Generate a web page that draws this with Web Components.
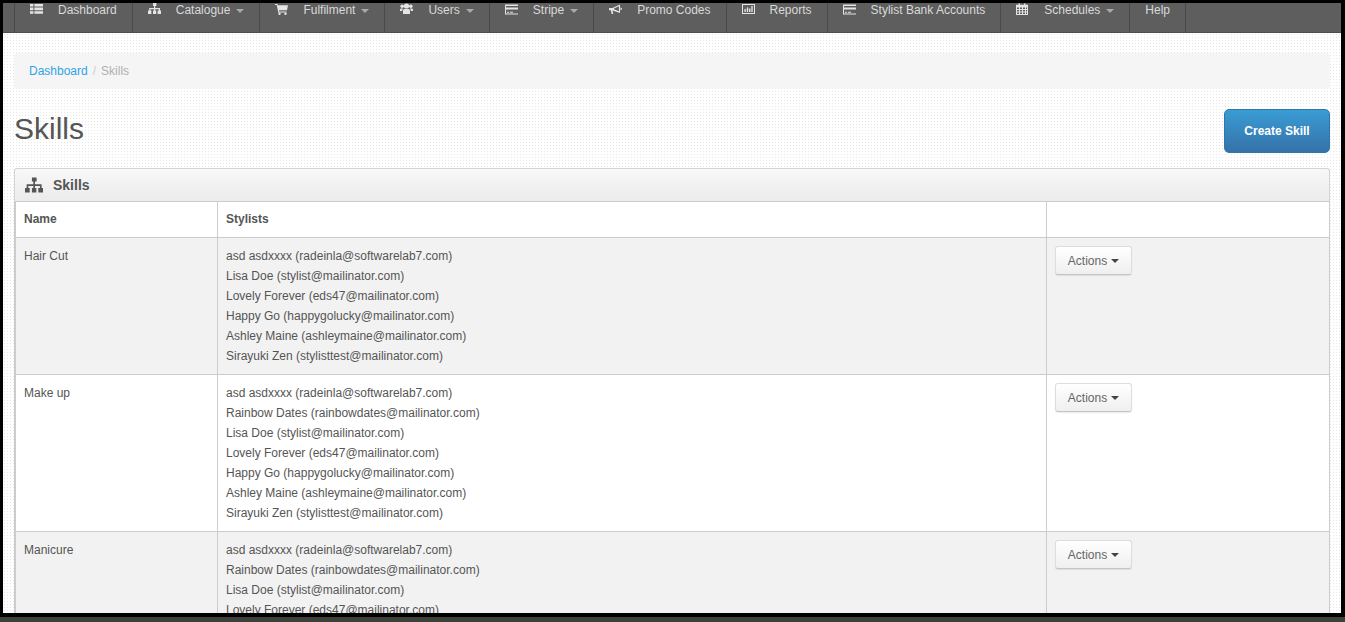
<!DOCTYPE html>
<html><head><meta charset="utf-8">
<style>
html,body{margin:0;height:100%;overflow:hidden;background:#000}
body{font:12px/20px "Liberation Sans",Arial,sans-serif;color:#555}
</style></head><body>
<app-shell>
  <top-nav>
    <nav-item icon="table">Dashboard</nav-item>
    <nav-item icon="sitemap" caret>Catalogue</nav-item>
    <nav-item icon="cart" caret>Fulfilment</nav-item>
    <nav-item icon="users" caret>Users</nav-item>
    <nav-item icon="card" caret>Stripe</nav-item>
    <nav-item icon="bullhorn">Promo Codes</nav-item>
    <nav-item icon="chart">Reports</nav-item>
    <nav-item icon="card">Stylist Bank Accounts</nav-item>
    <nav-item icon="calendar" caret>Schedules</nav-item>
    <nav-item>Help</nav-item>
  </top-nav>
  <page-body>
    <bread-crumb current="Skills">Dashboard</bread-crumb>
    <page-head title="Skills" action="Create Skill"></page-head>
    <skills-panel heading="Skills">
      <skill-row head name="Name" stylists="Stylists"></skill-row>
      <skill-row odd name="Hair Cut" stylists="asd asdxxxx (radeinla@softwarelab7.com)|Lisa Doe (stylist@mailinator.com)|Lovely Forever (eds47@mailinator.com)|Happy Go (happygolucky@mailinator.com)|Ashley Maine (ashleymaine@mailinator.com)|Sirayuki Zen (stylisttest@mailinator.com)"></skill-row>
      <skill-row name="Make up" stylists="asd asdxxxx (radeinla@softwarelab7.com)|Rainbow Dates (rainbowdates@mailinator.com)|Lisa Doe (stylist@mailinator.com)|Lovely Forever (eds47@mailinator.com)|Happy Go (happygolucky@mailinator.com)|Ashley Maine (ashleymaine@mailinator.com)|Sirayuki Zen (stylisttest@mailinator.com)"></skill-row>
      <skill-row odd name="Manicure" stylists="asd asdxxxx (radeinla@softwarelab7.com)|Rainbow Dates (rainbowdates@mailinator.com)|Lisa Doe (stylist@mailinator.com)|Lovely Forever (eds47@mailinator.com)"></skill-row>
    </skills-panel>
  </page-body>
  <screen-edge></screen-edge>
</app-shell>
<script>
const ICONS={
table:'<path d="M0 1h3.4v2.6H0zM4.4 1H13v2.6H4.4zM0 4.6h3.4v2.6H0zM4.4 4.6H13v2.6H4.4zM0 8.2h3.4v2.6H0zM4.4 8.2H13v2.6H4.4z"/>',
sitemap:'<path d="M5 0h3.4v3H7.2v2H12v2.6h1V11H9.6V7.6h1.2V6.2H7.2v1.4h1V11H5V7.6h1V6.2H2.4v1.4h1V11H0V7.6h1.200V5H6V3H5z"/>',
cart:'<path d="M0 1h2.400l.4 1.300H13l-1 5H4l.3 1.200H11.500v1H3.300L1.700 2H0z"/><circle cx="4.500" cy="10.800" r="1.200"/><circle cx="10.500" cy="10.800" r="1.200"/>',
users:'<circle cx="6.500" cy="3" r="2.600"/><circle cx="2.200" cy="3.200" r="1.800"/><circle cx="10.800" cy="3.200" r="1.800"/><path d="M3 11V7.500Q3 6 4.500 6h4Q10 6 10 7.500V11zM0 8V6.500Q0 5.400 1.200 5.400h2Q2.200 6 2.200 8zM13 8V6.500Q13 5.400 11.800 5.400h-2Q10.800 6 10.800 8z"/>',
card:'<path fill-rule="evenodd" d="M0 1.500h14v10H0zM1 3v1.500h12V3zM1 6.500V10.500h12V6.500zM2 8.800h2v.9H2zM5 8.800h3v.9H5z"/>',
bullhorn:'<path fill-rule="evenodd" d="M0 5h3.500L11 1.500V10L3.500 7.400l.8 3.600H2.600L1.800 7.300H0zM9.900 3.300L5 5.400v.9l4.900 1.900zM11.500 4.300Q13 4.800 13 5.800T11.500 7.300z"/>',
chart:'<path fill-rule="evenodd" d="M0 1h13v10H0zM1 2v8h11V2zM2.400 6h1.400v3H2.400zM4.800 4.500h1.400V9H4.800zM7 5.500h1.400V9H7zM9.300 3h1.400v6H9.300z"/>',
calendar:'<path fill-rule="evenodd" d="M0 1.800h2.500V.5h1.500v1.300h4V.5h1.500v1.300H12V12H0zM1 4.500V6h2V4.500zM4 4.500V6h2V4.500zM7 4.500V6h2V4.500zM10 4.500V6h1V4.500zM1 7V8.500h2V7zM4 7V8.500h2V7zM7 7V8.500h2V7zM10 7V8.500h1V7zM1 9.500V11h2V9.500zM4 9.500V11h2V9.500zM7 9.500V11h2V9.500zM10 9.500V11h1V9.500z"/>'
};
function def(name,css,html,setup){
  customElements.define(name,class extends HTMLElement{
    connectedCallback(){
      if(this.shadowRoot)return;
      const r=this.attachShadow({mode:'open'});
      r.innerHTML='<style>'+css+'</style>'+(typeof html==='function'?html(this):html);
    }
  });
}
const attr=(s)=>String(s==null?'':s).replace(/&/g,'&amp;').replace(/</g,'&lt;');
def('app-shell',`:host{display:block;position:relative;height:622px;overflow:hidden;background:#000}
.frame{position:absolute;inset:0}
.inner{height:100%;box-sizing:border-box;padding:3px 4px 0 3px}
`,`<div class="inner"><slot></slot></div>`);
def('top-nav',`:host{display:flex;box-sizing:border-box;height:30px;background:#5e5e5e;border-bottom:1px solid #4d4d4d;padding-left:11px;overflow:hidden}
::slotted(nav-item:last-child){border-right:1px solid #4a4a4a}`,`<slot></slot>`);
def('nav-item',`:host{display:flex;align-items:flex-start;box-sizing:border-box;height:100%;border-left:1px solid #4a4a4a;padding:0 15px;color:#d9d9d9;font-size:12px;line-height:14px;white-space:nowrap}
svg{width:13px;height:12px;margin:0 15px 0 0;fill:#e4e4e4;flex:none;margin-top:0}
.t{margin-top:0}
.c{display:inline-block;width:0;height:0;border:4px solid transparent;border-top-color:#aaa;border-bottom:0;margin:6px 0 0 6px}`,
el=>`${el.getAttribute('icon')?`<svg viewBox="0 0 13 12">${ICONS[el.getAttribute('icon')]}</svg>`:''}<span class="t"><slot></slot></span>${el.hasAttribute('caret')?'<i class="c"></i>':''}`);
def('page-body',`:host{display:block;box-sizing:border-box;height:590px;overflow:hidden;padding:20px 11px 0 11px;background-color:#fff;background-image:radial-gradient(#e8e8e8 .6px,transparent .7px);background-size:3px 3px}`,`<slot></slot>`);
def('bread-crumb',`:host{display:block;box-sizing:border-box;height:36px;padding:8px 15px;background:#f5f5f5;border-radius:4px;line-height:20px}
a{color:#2fa4e7}i{font-style:normal;color:#ccc;padding:0 5px}span{color:#b0b0b0}`,
el=>`<a><slot></slot></a><i>/</i><span>${attr(el.getAttribute('current'))}</span>`);
def('page-head',`:host{display:flex;justify-content:space-between;align-items:flex-start;height:79px;padding-top:20px;box-sizing:border-box}
h1{margin:0;font:400 30px/40px "Liberation Sans",Arial,sans-serif;color:#555}
button{width:106px;height:44px;border:1px solid #2e77ab;border-radius:5px;background:linear-gradient(#3a9cd4,#3572a8);color:#fff;font:700 12px "Liberation Sans",Arial,sans-serif;padding:0}`,
el=>`<h1>${attr(el.getAttribute('title'))}</h1><button>${attr(el.getAttribute('action'))}</button>`);
def('skills-panel',`:host{display:block}
.h{display:flex;align-items:center;gap:10px;box-sizing:border-box;height:34px;padding:0 10px;border:1px solid #d4d4d4;border-bottom-color:#ccc;border-radius:3px 3px 0 0;background:linear-gradient(#f8f8f8,#ebebeb);font-weight:700;font-size:14px;color:#555}
svg{width:18px;height:16px;fill:#555}
.b{border:1px solid #ccc;border-top:0;background:#fff}`,
el=>`<div class="h"><svg viewBox="0 0 13 11">${ICONS.sitemap}</svg><span>${attr(el.getAttribute('heading'))}</span></div><div class="b"><slot></slot></div>`);
def('skill-row',`:host{display:grid;grid-template-columns:202px 829px 1fr;border-bottom:1px solid #ccc}
:host(:last-child){border-bottom:0}
:host([odd]){background:#f2f2f2}
.c{padding:8px;border-left:1px solid #ccc;min-height:20px}
.c:first-child{border-left:0}
:host([head]) .c{font-weight:700;padding:7px 8px 8px}
div.l{line-height:20px;white-space:nowrap}`,
el=>{
  const h=el.hasAttribute('head');
  const ls=(el.getAttribute('stylists')||'').split('|').map(s=>`<div class="l">${attr(s)}</div>`).join('');
  return `<div class="c">${attr(el.getAttribute('name'))}</div><div class="c">${ls}</div><div class="c">${h?'':'<actions-button>Actions</actions-button>'}</div>`;
});
def('actions-button',`:host{display:inline-flex;align-items:center;justify-content:center;box-sizing:border-box;width:77px;height:29px;border:1px solid #ddd;border-bottom-color:#c4c4c4;border-radius:3px;background:linear-gradient(#fff,#efefef);box-shadow:0 1px 1px rgba(0,0,0,.08);color:#666;font-size:12px;position:relative}
i{display:inline-block;width:0;height:0;border:4px solid transparent;border-top-color:#444;border-bottom:0;margin-left:4px}`,`<slot></slot><i></i>`);
def('screen-edge',`:host{display:block;position:absolute;left:0;right:0;top:613px;height:9px;background:#000}
.d{position:absolute;left:0;right:0;top:4px;bottom:0;background:#3f4039}`,`<div class="d"></div>`);
</script>
</body></html>
